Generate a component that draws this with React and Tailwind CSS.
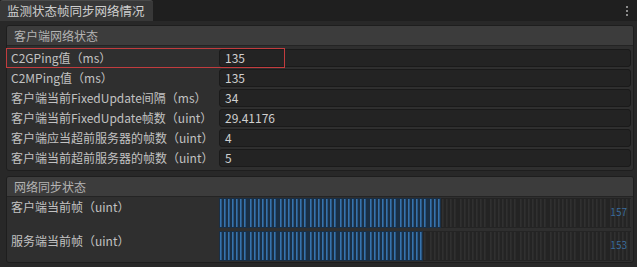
import React from "react";

const font = { fontFamily: '"Noto Sans CJK SC", "Noto Sans", sans-serif' };

function Bar({ filled, value }) {
  const rects = [];
  let x = 0;
  let i = 0;
  while (x < 412) {
    const on = i < filled;
    rects.push(
      <rect key={"b" + i} x={x + 1} y={1} width={1.6} height={28} fill={on ? "#3673ad" : "#303030"} />
    );
    x += 4;
    if (i % 7 === 6) x += 2;
    i++;
  }
  const fillW = (() => {
    let xx = 0;
    for (let k = 0; k < filled; k++) {
      xx += 4;
      if (k % 7 === 6) xx += 2;
    }
    return xx;
  })();
  return (
    <div className="relative h-[30px] flex-1 overflow-hidden bg-[#242424]">
      <svg width="412" height="30" className="block">
        <rect x={0} y={0} width={fillW} height={30} fill="#1a2f45" />
        {rects}
      </svg>
      <span className="absolute right-[4px] top-[8px] text-[10px] leading-[12px] text-[#3a6c9c]">{value}</span>
    </div>
  );
}

function Row({ label, value }) {
  return (
    <div className="flex h-[20px] items-center">
      <div className="w-[212px] pl-[4px] text-[12px] text-[#c2c2c2] whitespace-nowrap">{label}</div>
      <div className="flex h-[18px] flex-1 items-center rounded-[3px] border border-[#1a1a1a] bg-[#232323] pl-[5px] text-[12px] text-[#d0d0d0]">
        {value}
      </div>
    </div>
  );
}

function Header({ title }) {
  return (
    <div className="flex h-[20px] items-center border-b border-[#242424] bg-[#3c3c3c] pl-[7px] text-[12px] text-[#b4b4b4]">
      {title}
    </div>
  );
}

export default function App() {
  return (
    <div className="relative h-[267px] w-[637px] overflow-hidden bg-[#282828]" style={font}>
      {/* tab bar */}
      <div className="flex h-[21px] items-stretch bg-[#1f1f1f]">
        <div className="flex w-[153px] items-center rounded-t-[3px] border-t border-[#4a4a4a] bg-[#383838] pl-[7px] text-[12.5px] text-[#cfcfcf]">
          监测状态帧同步网络情况
        </div>
        <div className="flex-1" />
        <div className="mr-[9px] flex flex-col justify-center gap-[2px]">
          <div className="h-[2px] w-[2px] bg-[#8c8c8c]" />
          <div className="h-[2px] w-[2px] bg-[#8c8c8c]" />
          <div className="h-[2px] w-[2px] bg-[#8c8c8c]" />
        </div>
      </div>

      <div className="flex">
        <div className="flex flex-1 flex-col gap-[5px] pl-[6px] pr-[5px] pt-[4px]">
          {/* group 1 */}
          <div className="overflow-hidden rounded-[3px] border border-[#1e1e1e] bg-[#2f2f2f]">
            <Header title="客户端网络状态" />
            <div className="flex flex-col pb-[2px] pr-[2px] pt-[2px]">
              <Row label="C2GPing值（ms）" value="135" />
              <Row label="C2MPing值（ms）" value="135" />
              <Row label="客户端当前FixedUpdate间隔（ms）" value="34" />
              <Row label="客户端当前FixedUpdate帧数（uint）" value="29.41176" />
              <Row label="客户端应当超前服务器的帧数（uint）" value="4" />
              <Row label="客户端当前超前服务器的帧数（uint）" value="5" />
            </div>
          </div>

          {/* group 2 */}
          <div className="overflow-hidden rounded-[3px] border border-[#1e1e1e] bg-[#2f2f2f]">
            <Header title="网络同步状态" />
            <div className="flex flex-col gap-[3px] pb-[1px] pr-[2px] pt-[1px]">
              <div className="flex">
                <div className="w-[212px] pl-[4px] text-[12px] text-[#c2c2c2]">客户端当前帧（uint）</div>
                <Bar filled={52} value="157" />
              </div>
              <div className="flex">
                <div className="w-[212px] pl-[4px] pt-[1px] text-[12px] text-[#c2c2c2]">服务端当前帧（uint）</div>
                <Bar filled={48} value="153" />
              </div>
            </div>
          </div>
        </div>
        <div className="mt-[4px] h-[250px] w-[1px] bg-[#3a3a3a]" />
        <div className="w-[1px]" />
      </div>

      {/* highlight */}
      <div className="pointer-events-none absolute left-[6px] top-[48px] h-[20px] w-[279px] border border-[#c23c3e]" />
    </div>
  );
}
